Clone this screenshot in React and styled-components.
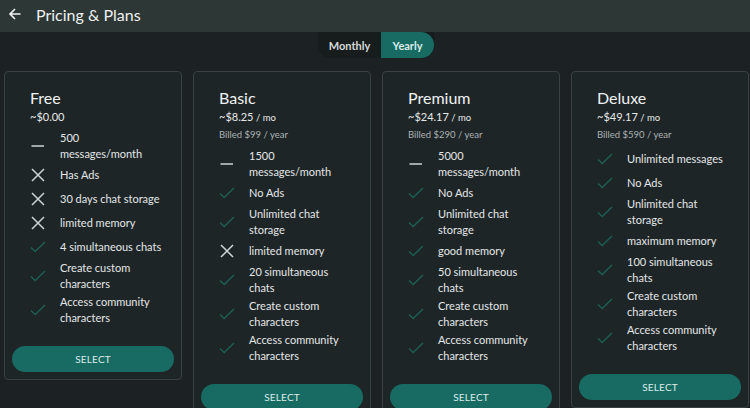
import React from "react";
import styled, { createGlobalStyle } from "styled-components";

const GlobalStyle = createGlobalStyle`
	html, body {
		margin: 0;
		padding: 0;
		background: #1c2123;
		font-family: Lato, "Open Sans", sans-serif;
		color: #e6e9e9;
		overflow: hidden;
	}
`;

const Page = styled.div`
	width: 750px;
	height: 408px;
	overflow: hidden;
	background: #1c2123;
`;

const Header = styled.header`
	height: 32px;
	display: flex;
	align-items: center;
	gap: 14px;
	padding: 0 0 4px 8px;
	box-sizing: border-box;
	background: #2c3736;
`;

const Title = styled.h1`
	margin: 0;
	font-size: 16px;
	font-weight: 400;
	color: #eef0f0;
`;

const ToggleRow = styled.div`
	display: flex;
	justify-content: center;
	padding-left: 2px;
`;

const Toggle = styled.div`
	display: flex;
	height: 26px;
	background: #171c1d;
	border-radius: 0 0 13px 13px;
`;

const ToggleOption = styled.button`
	border: none;
	font-family: inherit;
	font-size: 11px;
	font-weight: 700;
	padding: 0;
	color: ${(p) => (p.$active ? "#d9ecea" : "#d6dada")};
	background: ${(p) => (p.$active ? "#176b63" : "transparent")};
	border-radius: ${(p) => (p.$active ? "0 13px 13px 0" : "13px 0 0 13px")};
	width: ${(p) => (p.$active ? "53px" : "63px")};
`;

const Cards = styled.div`
	display: flex;
	align-items: flex-start;
	gap: 11px;
	padding: 13px 0 0 4px;
`;

const Card = styled.section`
	width: 178px;
	flex-shrink: 0;
	box-sizing: border-box;
	padding: 7px;
	border: 1px solid #394143;
	border-radius: 4px;
	background: #1e2527;
`;

const Content = styled.div`
	padding: 9px 12px 0 18px;
`;

const PlanName = styled.h2`
	margin: 0;
	font-size: 16px;
	line-height: 20px;
	font-weight: 400;
	color: #f0f2f2;
`;

const Price = styled.p`
	margin: 0;
	font-size: 11px;
	line-height: 17px;
	color: #e6e9e9;

	& > span {
		font-size: 9.5px;
	}
`;

const Billed = styled.p`
	margin: 0;
	font-size: 9.5px;
	line-height: 17px;
	color: #aab2b2;
`;

const Features = styled.ul`
	list-style: none;
	margin: 5px 0 0;
	padding: 0;
	display: flex;
	flex-direction: column;
	gap: 2px;
`;

const Feature = styled.li`
	display: flex;
	align-items: center;
	min-height: 22px;
`;

const IconBox = styled.span`
	width: 30px;
	flex-shrink: 0;
	display: flex;
	align-items: center;
	color: ${(p) => (p.$kind === "yes" ? "#1d5f54" : "#cfd4d4")};
`;

const FeatureText = styled.span`
	font-size: 11px;
	line-height: 16px;
	color: #e4e7e7;
`;

const SelectButton = styled.button`
	display: block;
	width: 100%;
	height: 26px;
	margin-top: 20px;
	border: none;
	border-radius: 13px;
	background: #176b63;
	color: #dcecea;
	font-family: inherit;
	font-size: 10px;
	font-weight: 400;
	letter-spacing: 0.02em;
`;

function BackArrow() {
	return (
		<svg width="14" height="14" viewBox="0 0 14 14" fill="none">
			<path d="M12.5 7H2M7 2 2 7 7 12" stroke="#f2f4f4" strokeWidth="1.6" />
		</svg>
	);
}

function FeatureIcon({ kind }) {
	if (kind === "yes") {
		return (
			<svg width="16" height="12" viewBox="0 0 16 12" fill="none">
				<path d="M1 6.5 5.2 10.5 15 1" stroke="currentColor" strokeWidth="1.4" />
			</svg>
		);
	}
	if (kind === "no") {
		return (
			<svg width="16" height="14" viewBox="0 0 16 14" fill="none">
				<path d="M2 1 14 13M14 1 2 13" stroke="currentColor" strokeWidth="1.5" />
			</svg>
		);
	}
	return (
		<svg width="16" height="4" viewBox="0 0 16 4" fill="none">
			<path d="M1.5 2H14" stroke="currentColor" strokeWidth="1.5" />
		</svg>
	);
}

const plans = [
	{
		name: "Free",
		price: "~$0.00",
		features: [
			["dash", "500 messages/month"],
			["no", "Has Ads"],
			["no", "30 days chat storage"],
			["no", "limited memory"],
			["yes", "4 simultaneous chats"],
			["yes", "Create custom characters"],
			["yes", "Access community characters"],
		],
	},
	{
		name: "Basic",
		price: "~$8.25",
		billed: "Billed $99 / year",
		features: [
			["dash", "1500 messages/month"],
			["yes", "No Ads"],
			["yes", "Unlimited chat storage"],
			["no", "limited memory"],
			["yes", "20 simultaneous chats"],
			["yes", "Create custom characters"],
			["yes", "Access community characters"],
		],
	},
	{
		name: "Premium",
		price: "~$24.17",
		billed: "Billed $290 / year",
		features: [
			["dash", "5000 messages/month"],
			["yes", "No Ads"],
			["yes", "Unlimited chat storage"],
			["yes", "good memory"],
			["yes", "50 simultaneous chats"],
			["yes", "Create custom characters"],
			["yes", "Access community characters"],
		],
	},
	{
		name: "Deluxe",
		price: "~$49.17",
		billed: "Billed $590 / year",
		features: [
			["yes", "Unlimited messages"],
			["yes", "No Ads"],
			["yes", "Unlimited chat storage"],
			["yes", "maximum memory"],
			["yes", "100 simultaneous chats"],
			["yes", "Create custom characters"],
			["yes", "Access community characters"],
		],
	},
];

export default function App() {
	return (
		<Page>
			<GlobalStyle />
			<Header>
				<BackArrow />
				<Title>Pricing &amp; Plans</Title>
			</Header>
			<ToggleRow>
				<Toggle>
					<ToggleOption>Monthly</ToggleOption>
					<ToggleOption $active>Yearly</ToggleOption>
				</Toggle>
			</ToggleRow>
			<Cards>
				{plans.map((plan) => (
					<Card key={plan.name}>
						<Content>
							<PlanName>{plan.name}</PlanName>
							<Price>
								{plan.price}
								{plan.billed && <span> / mo</span>}
							</Price>
							{plan.billed && <Billed>{plan.billed}</Billed>}
							<Features>
								{plan.features.map(([kind, text]) => (
									<Feature key={text}>
										<IconBox $kind={kind}>
											<FeatureIcon kind={kind} />
										</IconBox>
										<FeatureText>{text}</FeatureText>
									</Feature>
								))}
							</Features>
						</Content>
						<SelectButton>SELECT</SelectButton>
					</Card>
				))}
			</Cards>
		</Page>
	);
}
